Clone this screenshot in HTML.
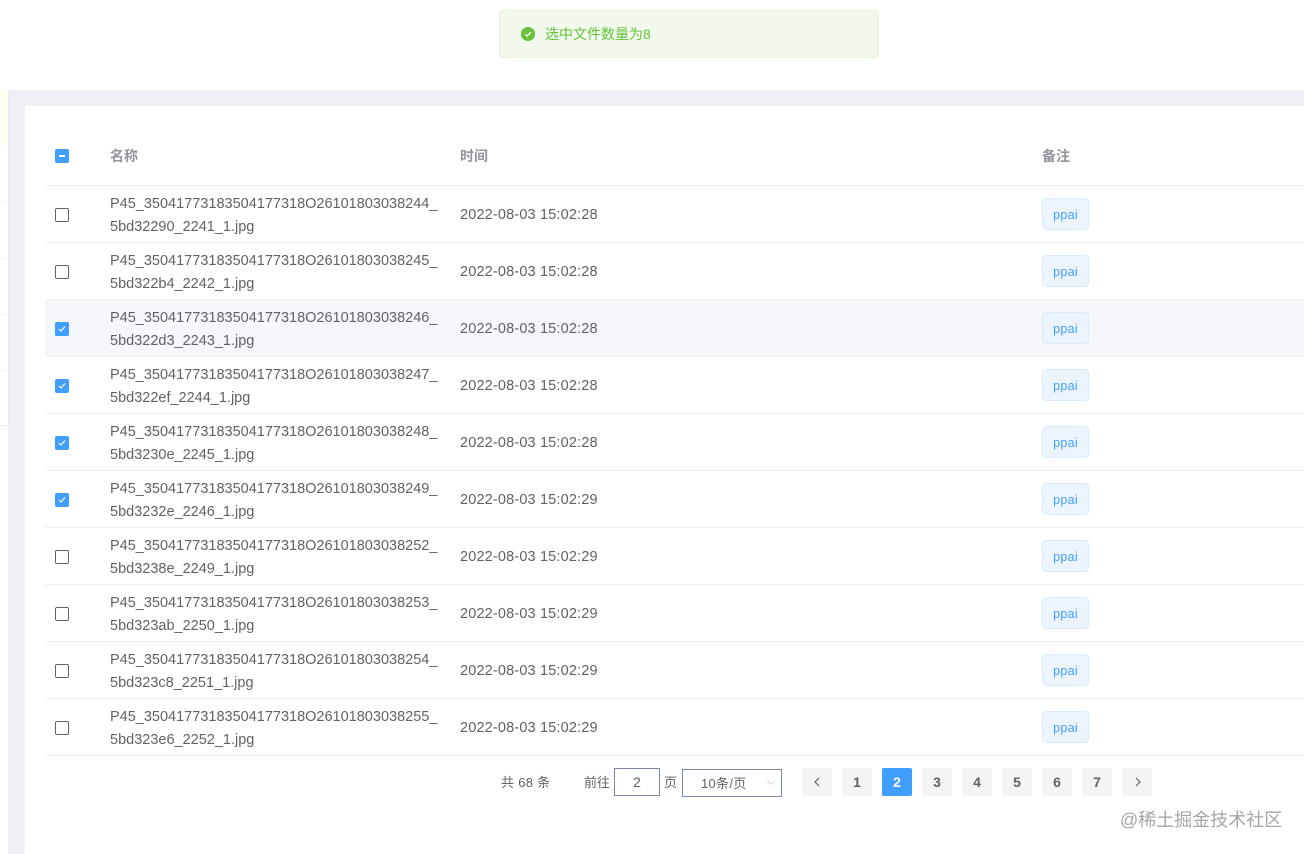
<!DOCTYPE html>
<html><head><meta charset="utf-8">
<style>
html,body{margin:0;padding:0;background:#fff;}
body{width:1304px;height:854px;position:relative;overflow:hidden;font-family:"Liberation Sans","Noto Sans CJK SC",sans-serif;color:#606266;font-size:14px;}
.a{position:absolute;white-space:nowrap;}
.line{position:absolute;left:45px;width:1259px;height:1px;background:#ebeef5;}
.cb{position:absolute;left:55px;width:14px;height:14px;box-sizing:border-box;border:1px solid #606266;border-radius:2px;background:#fff;}
.cb.on{background:#409eff;border-color:#409eff;}
.name{position:absolute;left:110px;font-size:14.5px;line-height:23px;white-space:nowrap;margin-top:2px;}
.time{position:absolute;left:460px;font-size:14.5px;line-height:23px;letter-spacing:.16px;white-space:nowrap;margin-top:1px;}
.tag{position:absolute;left:1042px;width:47px;height:32px;box-sizing:border-box;background:#ecf5ff;border:1px solid #d9ecff;border-radius:4px;color:#409eff;font-size:12.5px;line-height:32px;text-align:center;letter-spacing:.3px;}
.pg{position:absolute;top:768px;width:30px;height:28px;background:#f4f4f5;border-radius:2px;text-align:center;line-height:29px;font-size:14px;font-weight:bold;color:#606266;}
.pg.on{background:#409eff;color:#fff;}
.th{position:absolute;top:147px;font-size:14px;font-weight:bold;color:#909399;line-height:18px;}
</style></head><body>

<div class="a" style="left:0;top:90px;width:8px;height:55px;background:#fffef0"></div>
<div class="a" style="left:0;top:201px;width:8px;height:1px;background:#f7f7f7"></div>
<div class="a" style="left:0;top:258px;width:8px;height:1px;background:#f7f7f7"></div>
<div class="a" style="left:0;top:314px;width:8px;height:1px;background:#f7f7f7"></div>
<div class="a" style="left:0;top:370px;width:8px;height:1px;background:#f7f7f7"></div>
<div class="a" style="left:0;top:425px;width:8px;height:1px;background:#f0f0f0"></div>

<div class="a" style="left:8px;top:90px;width:1296px;height:764px;background:#eff0f6"></div>
<div class="a" style="left:8px;top:90px;width:2px;height:336px;background:#ebecf2"></div>
<div class="a" style="left:25px;top:106px;width:1279px;height:748px;background:#fff"></div>

<div class="a" style="left:499px;top:10px;width:380px;height:48px;box-sizing:border-box;background:#f0f9eb;border:1px solid #e1f3d8;border-radius:4px"></div>
<svg class="a" style="left:521px;top:27px" width="14" height="14" viewBox="0 0 14 14"><circle cx="7" cy="7" r="7" fill="#67c23a"/><path d="M4.2 7.2 6.2 9.1 9.9 5.2" fill="none" stroke="#fff" stroke-width="1.3"/></svg>
<div class="a" style="left:545px;top:25px;font-size:14px;line-height:18px;color:#67c23a;">选中文件数量为8</div>

<div class="cb on" style="top:149px"></div>
<div class="a" style="left:59px;top:155px;width:6px;height:2px;background:#fff"></div>
<div class="th" style="left:110px">名称</div>
<div class="th" style="left:460px">时间</div>
<div class="th" style="left:1042px">备注</div>
<div class="line" style="top:185px"></div>

<div class="a" style="left:45px;top:300px;width:1259px;height:56px;background:#f5f7fa"></div>

<!-- rows -->
<div class="cb" style="top:208px"></div>
<div class="name" style="top:191px">P45_35041773183504177318O26101803038244_<br>5bd32290_2241_1.jpg</div>
<div class="time" style="top:203px">2022-08-03 15:02:28</div>
<div class="tag" style="top:198px">ppai</div>
<div class="line" style="top:242px"></div>

<div class="cb" style="top:265px"></div>
<div class="name" style="top:248px">P45_35041773183504177318O26101803038245_<br>5bd322b4_2242_1.jpg</div>
<div class="time" style="top:260px">2022-08-03 15:02:28</div>
<div class="tag" style="top:255px">ppai</div>
<div class="line" style="top:299px"></div>

<div class="cb on" style="top:322px"><svg style="position:absolute;left:0;top:0" width="12" height="12" viewBox="0 0 12 12"><path d="M3 6 5 8 9 3.5" fill="none" stroke="#fff" stroke-width="1.2"/></svg></div>
<div class="name" style="top:305px">P45_35041773183504177318O26101803038246_<br>5bd322d3_2243_1.jpg</div>
<div class="time" style="top:317px">2022-08-03 15:02:28</div>
<div class="tag" style="top:312px">ppai</div>
<div class="line" style="top:356px"></div>

<div class="cb on" style="top:379px"><svg style="position:absolute;left:0;top:0" width="12" height="12" viewBox="0 0 12 12"><path d="M3 6 5 8 9 3.5" fill="none" stroke="#fff" stroke-width="1.2"/></svg></div>
<div class="name" style="top:362px">P45_35041773183504177318O26101803038247_<br>5bd322ef_2244_1.jpg</div>
<div class="time" style="top:374px">2022-08-03 15:02:28</div>
<div class="tag" style="top:369px">ppai</div>
<div class="line" style="top:413px"></div>

<div class="cb on" style="top:436px"><svg style="position:absolute;left:0;top:0" width="12" height="12" viewBox="0 0 12 12"><path d="M3 6 5 8 9 3.5" fill="none" stroke="#fff" stroke-width="1.2"/></svg></div>
<div class="name" style="top:419px">P45_35041773183504177318O26101803038248_<br>5bd3230e_2245_1.jpg</div>
<div class="time" style="top:431px">2022-08-03 15:02:28</div>
<div class="tag" style="top:426px">ppai</div>
<div class="line" style="top:470px"></div>

<div class="cb on" style="top:493px"><svg style="position:absolute;left:0;top:0" width="12" height="12" viewBox="0 0 12 12"><path d="M3 6 5 8 9 3.5" fill="none" stroke="#fff" stroke-width="1.2"/></svg></div>
<div class="name" style="top:476px">P45_35041773183504177318O26101803038249_<br>5bd3232e_2246_1.jpg</div>
<div class="time" style="top:488px">2022-08-03 15:02:29</div>
<div class="tag" style="top:483px">ppai</div>
<div class="line" style="top:527px"></div>

<div class="cb" style="top:550px"></div>
<div class="name" style="top:533px">P45_35041773183504177318O26101803038252_<br>5bd3238e_2249_1.jpg</div>
<div class="time" style="top:545px">2022-08-03 15:02:29</div>
<div class="tag" style="top:540px">ppai</div>
<div class="line" style="top:584px"></div>

<div class="cb" style="top:607px"></div>
<div class="name" style="top:590px">P45_35041773183504177318O26101803038253_<br>5bd323ab_2250_1.jpg</div>
<div class="time" style="top:602px">2022-08-03 15:02:29</div>
<div class="tag" style="top:597px">ppai</div>
<div class="line" style="top:641px"></div>

<div class="cb" style="top:664px"></div>
<div class="name" style="top:647px">P45_35041773183504177318O26101803038254_<br>5bd323c8_2251_1.jpg</div>
<div class="time" style="top:659px">2022-08-03 15:02:29</div>
<div class="tag" style="top:654px">ppai</div>
<div class="line" style="top:698px"></div>

<div class="cb" style="top:721px"></div>
<div class="name" style="top:704px">P45_35041773183504177318O26101803038255_<br>5bd323e6_2252_1.jpg</div>
<div class="time" style="top:716px">2022-08-03 15:02:29</div>
<div class="tag" style="top:711px">ppai</div>
<div class="line" style="top:755px"></div>

<!-- pagination -->
<div class="a" style="left:501px;top:774px;font-size:13px;line-height:18px;letter-spacing:.3px">共 68 条</div>
<div class="a" style="left:584px;top:774px;font-size:13px;line-height:18px">前往</div>
<div class="a" style="left:614px;top:768px;width:46px;height:28px;box-sizing:border-box;border:1px solid #7b8aa0;text-align:center;line-height:27px;font-size:14px">2</div>
<div class="a" style="left:664px;top:774px;font-size:13px;line-height:18px">页</div>
<div class="a" style="left:682px;top:769px;width:100px;height:28px;box-sizing:border-box;border:1px solid #7b8aa0;font-size:13px;line-height:27px;padding-left:18px;letter-spacing:.3px">10条/页</div>
<svg class="a" style="left:765px;top:779px" width="12" height="8" viewBox="0 0 12 8"><path d="M2 1.5 6 5.5 10 1.5" fill="none" stroke="#d5d8de" stroke-width="1"/></svg>

<div class="pg" style="left:802px"></div>
<svg class="a" style="left:812px;top:776px" width="10" height="12" viewBox="0 0 10 12"><path d="M7 2 3 6 7 10" fill="none" stroke="#606266" stroke-width="1.2"/></svg>
<div class="pg" style="left:842px">1</div>
<div class="pg on" style="left:882px">2</div>
<div class="pg" style="left:922px">3</div>
<div class="pg" style="left:962px">4</div>
<div class="pg" style="left:1002px">5</div>
<div class="pg" style="left:1042px">6</div>
<div class="pg" style="left:1082px">7</div>
<div class="pg" style="left:1122px"></div>
<svg class="a" style="left:1133px;top:776px" width="10" height="12" viewBox="0 0 10 12"><path d="M3 2 7 6 3 10" fill="none" stroke="#606266" stroke-width="1.2"/></svg>

<div class="a" style="left:1120px;top:809px;font-size:18px;line-height:22px;color:#a6a6a6">@稀土掘金技术社区</div>
</body></html>
